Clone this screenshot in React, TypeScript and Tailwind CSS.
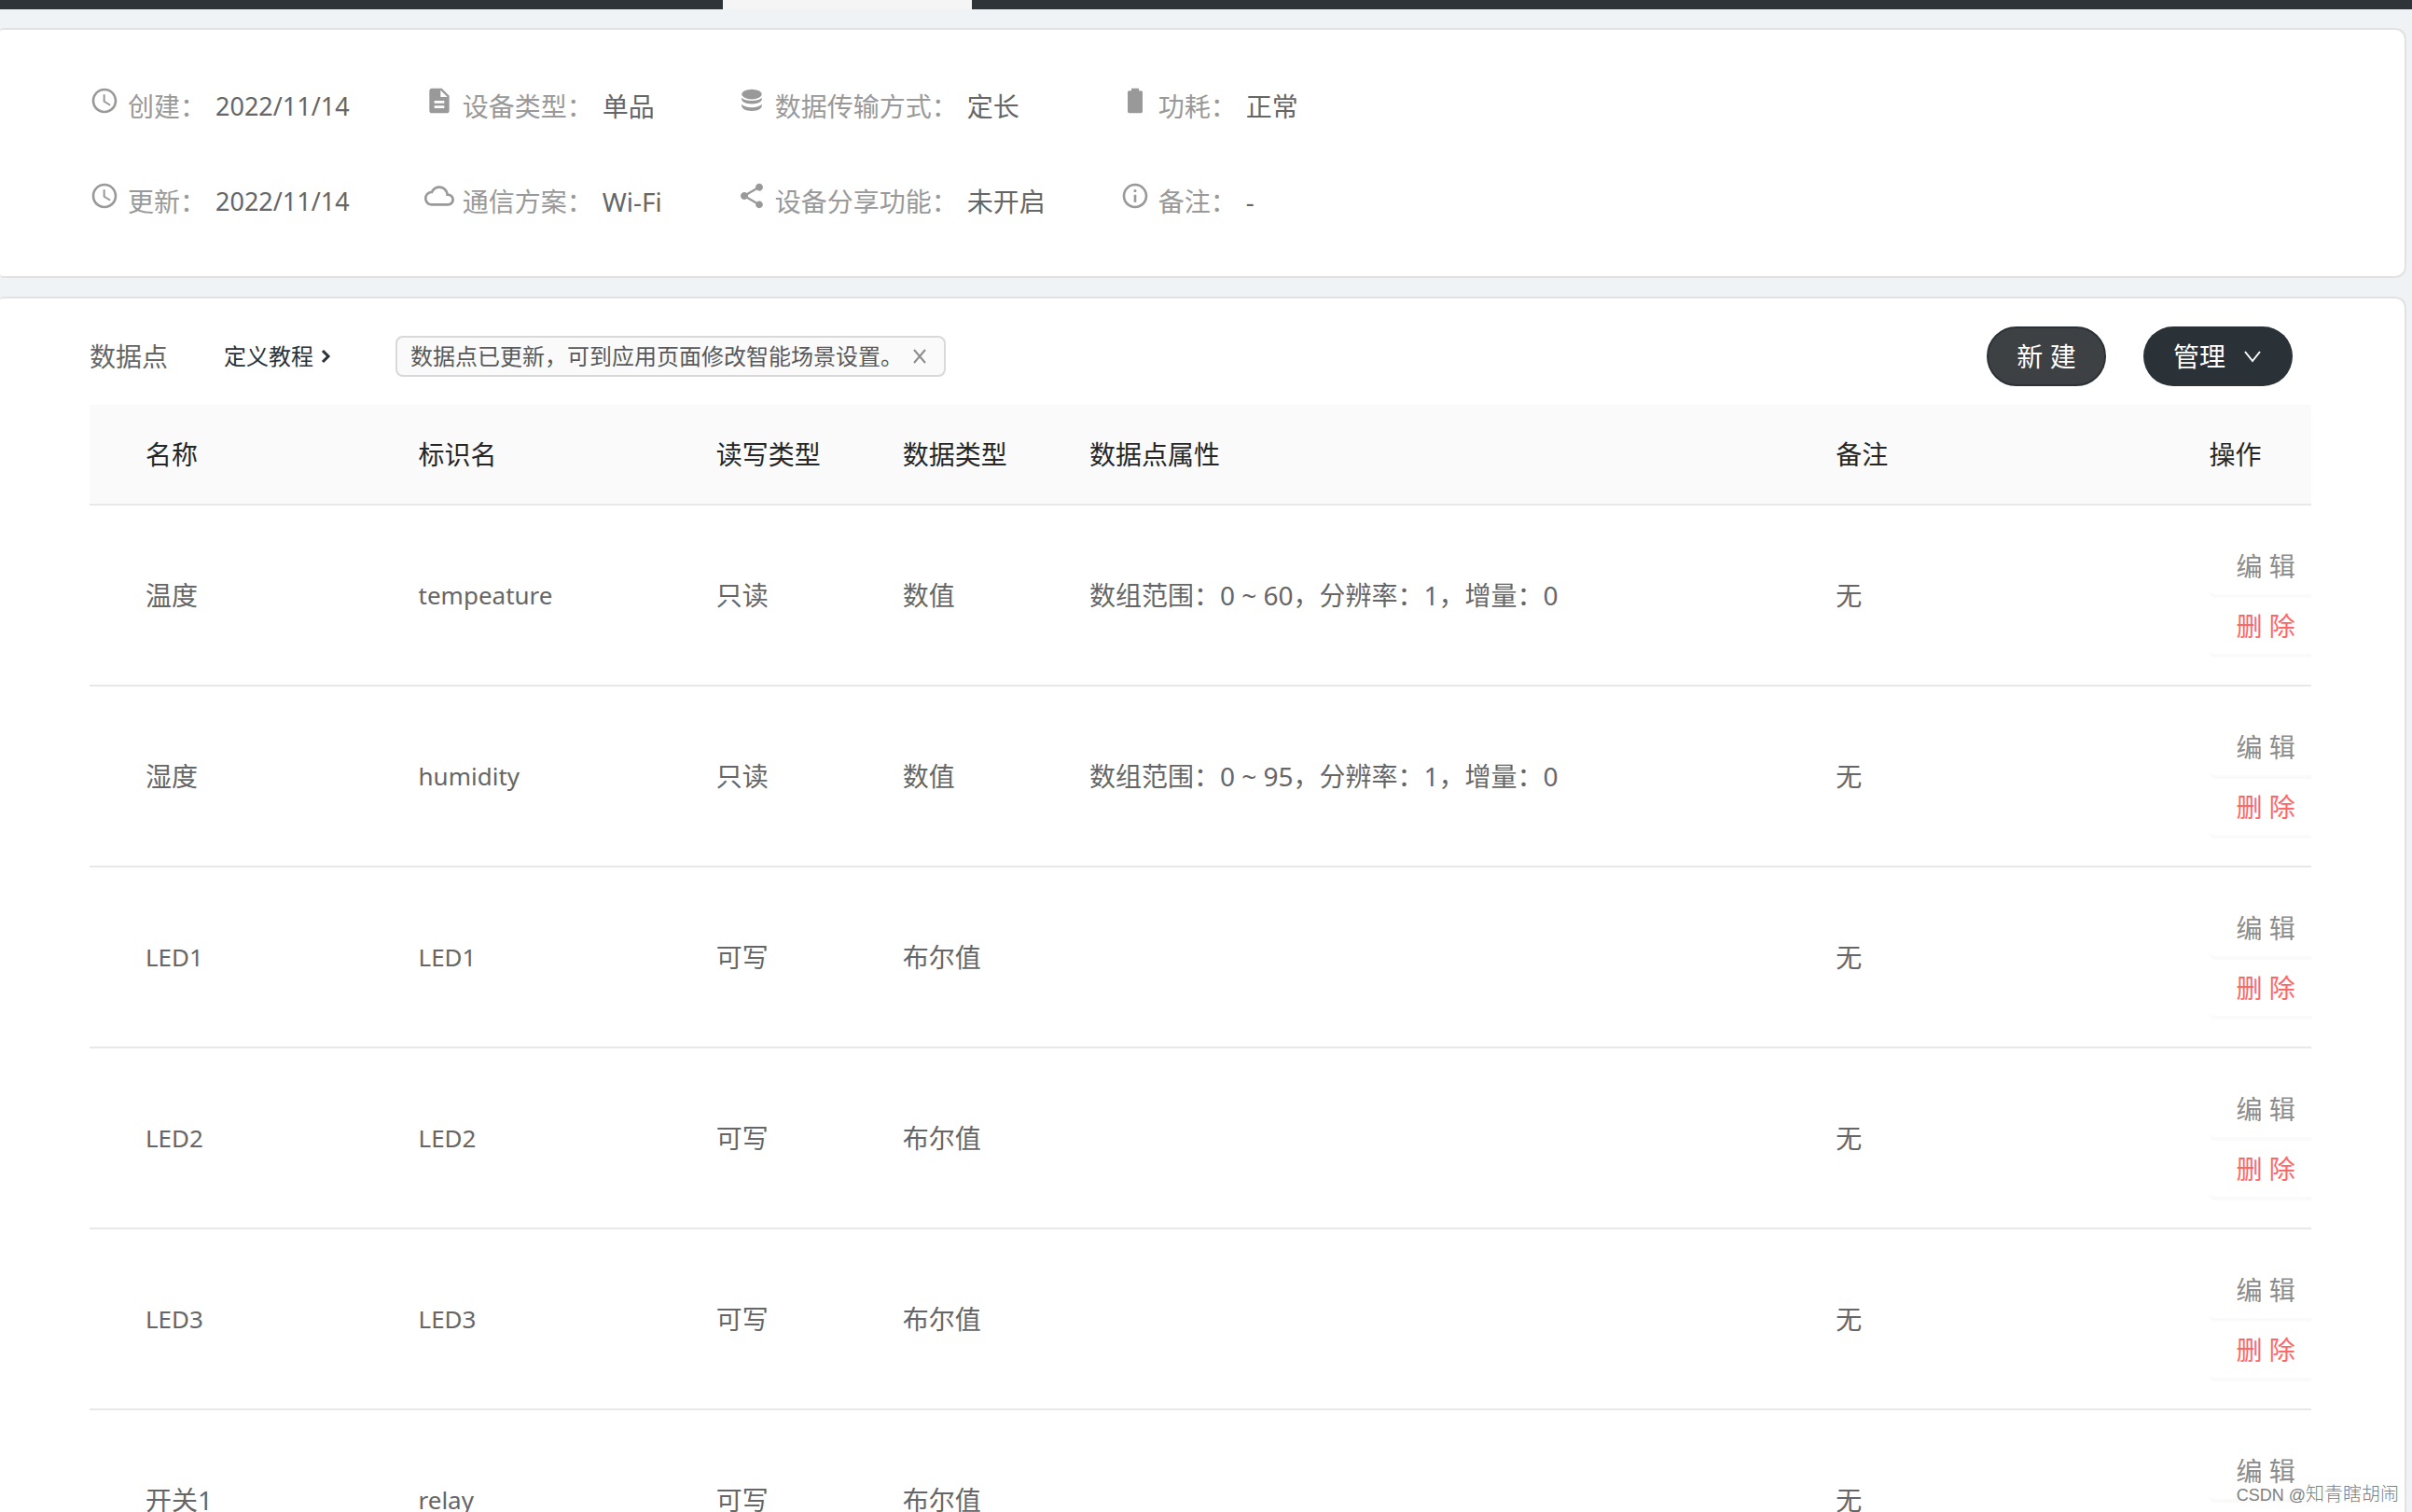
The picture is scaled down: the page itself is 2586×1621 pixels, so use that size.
import type { ReactNode } from "react";
import { MdAccessTime, MdCloudQueue, MdDescription, MdInfoOutline, MdShare } from "react-icons/md";

const DatabaseIcon = () => (
  <svg viewBox="0 0 24 24" width="32" height="32" fill="currentColor" aria-hidden="true">
    <ellipse cx="12" cy="6.8" rx="8.1" ry="4" />
    <path d="M3.9 9.600c1.600 1.700 4.500 2.400 8.100 2.400s6.500-.7 8.100-2.400c.6 3.500-3.300 5-8.100 5s-8.700-1.500-8.100-5z" />
    <path d="M3.900 14.900c1.600 1.700 4.500 2.500 8.100 2.500s6.500-.8 8.100-2.500c.6 3.800-3.300 5.300-8.100 5.300s-8.700-1.500-8.100-5.300z" />
  </svg>
);

const BatteryIcon = () => (
  <svg viewBox="0 0 24 24" width="32" height="32" fill="currentColor" aria-hidden="true">
    <path d="M16.700 4H15V2H9v2H7.300C6.600 4 6 4.600 6 5.300v15.400c0 .7.600 1.300 1.300 1.300h9.400c.7 0 1.300-.6 1.300-1.300V5.300c0-.7-.6-1.300-1.300-1.300z" />
  </svg>
);

type Info = { icon: ReactNode; label: string; value: string; latin?: boolean };

const infoColumns: Info[][] = [
  [
    { icon: <MdAccessTime size={32} />, label: "创建", value: "2022/11/14", latin: true },
    { icon: <MdAccessTime size={32} />, label: "更新", value: "2022/11/14", latin: true },
  ],
  [
    { icon: <MdDescription size={32} />, label: "设备类型", value: "单品" },
    { icon: <MdCloudQueue size={32} />, label: "通信方案", value: "Wi-Fi" },
  ],
  [
    { icon: <DatabaseIcon />, label: "数据传输方式", value: "定长" },
    { icon: <MdShare size={32} />, label: "设备分享功能", value: "未开启" },
  ],
  [
    { icon: <BatteryIcon />, label: "功耗", value: "正常" },
    { icon: <MdInfoOutline size={32} />, label: "备注", value: "-" },
  ],
];

type Row = { name: string; id: string; access: string; type: string; attrs: string; note: string };

const rows: Row[] = [
  { name: "温度", id: "tempeature", access: "只读", type: "数值", attrs: "数组范围：0 ~ 60，分辨率：1，增量：0", note: "无" },
  { name: "湿度", id: "humidity", access: "只读", type: "数值", attrs: "数组范围：0 ~ 95，分辨率：1，增量：0", note: "无" },
  { name: "LED1", id: "LED1", access: "可写", type: "布尔值", attrs: "", note: "无" },
  { name: "LED2", id: "LED2", access: "可写", type: "布尔值", attrs: "", note: "无" },
  { name: "LED3", id: "LED3", access: "可写", type: "布尔值", attrs: "", note: "无" },
  { name: "开关1", id: "relay", access: "可写", type: "布尔值", attrs: "", note: "无" },
];

function InfoCard() {
  return (
    <section className="mt-5 mr-[6px] flex gap-20 rounded-l rounded-r-xl border-2 border-l-0 border-[#e2e2e2] bg-white pt-[58px] pb-14 pl-24">
      {infoColumns.map((column, i) => (
        <dl key={i} className="flex flex-col gap-[54px]">
          {column.map((item) => (
            <div key={item.label} className="flex h-12 items-center">
              <dt className="flex items-center text-[#999999]">
                <span className="mr-[9px] mb-3">{item.icon}</span>
                {item.label}：
              </dt>
              <dd className={item.latin ? "ml-[10px] text-[27px] text-[#666666]" : "ml-[10px] text-[#666666]"}>{item.value}</dd>
            </div>
          ))}
        </dl>
      ))}
    </section>
  );
}

function Toolbar() {
  return (
    <div className="flex h-16 items-center">
      <h2 className="text-[#666666]">数据点</h2>
      <a href="#tutorial" className="ml-15 flex items-center text-[24px] text-[#2a3137]">
        定义教程
        <svg viewBox="0 0 12 16" width="12" height="16" className="ml-2" fill="none" stroke="currentColor" strokeWidth="3" aria-hidden="true">
          <path d="M2 2l6 6-6 6" />
        </svg>
      </a>
      <div className="ml-[68px] flex h-11 items-center rounded-lg border-2 border-[#d9d9d9] bg-[#fafafa] pr-[18px] pl-[14px] text-[24px] text-[#595959]">
        数据点已更新，可到应用页面修改智能场景设置。
        <button type="button" aria-label="关闭" className="ml-[10px] text-[#8c8c8c]">
          <svg viewBox="0 0 16 16" width="16" height="16" fill="none" stroke="currentColor" strokeWidth="2" aria-hidden="true">
            <path d="M2 1l12 14M14 1L2 15" />
          </svg>
        </button>
      </div>
      <div className="mr-5 ml-auto flex gap-10 text-white">
        <button type="button" className="h-16 w-32 rounded-full border-2 border-[#2a3137] bg-[#3e4144]">新 建</button>
        <button type="button" className="flex h-16 w-40 items-center gap-5 rounded-full bg-[#2a3137] pl-8">
          管理
          <svg viewBox="0 0 18 14" width="18" height="14" fill="none" stroke="currentColor" strokeWidth="2" aria-hidden="true">
            <path d="M1 2l8 10 8-10" />
          </svg>
        </button>
      </div>
    </div>
  );
}

const isLatin = (text: string) => /^[\w-]+$/.test(text);

function DataTable() {
  return (
    <table className="mt-5 w-full table-fixed border-collapse text-left text-[#666666]">
      <colgroup>
        <col className="w-[14.8%]" />
        <col className="w-[13.4%]" />
        <col className="w-[8.4%]" />
        <col className="w-[8.4%]" />
        <col className="w-[33.6%]" />
        <col className="w-[16.8%]" />
        <col />
      </colgroup>
      <thead className="bg-[#fafafa] text-[#262626]">
        <tr className="h-[107px] border-b-2 border-[#e8e8e8]">
          {["名称", "标识名", "读写类型", "数据类型", "数据点属性", "备注", "操作"].map((h, i) => (
            <th key={h} scope="col" className={i === 0 ? "pl-15 font-normal" : "font-normal"}>{h}</th>
          ))}
        </tr>
      </thead>
      <tbody>
        {rows.map((row) => (
          <tr key={row.name} className="h-[194px] border-b-2 border-[#e8e8e8]">
            <td className={isLatin(row.name) ? "pl-15 text-[26px]" : "pl-15"}>{row.name}</td>
            <td className="text-[26px]">{row.id}</td>
            <td>{row.access}</td>
            <td>{row.type}</td>
            <td>{row.attrs}</td>
            <td>{row.note}</td>
            <td className="pt-[6px]">
              <button type="button" className="block h-16 w-full rounded-bl-lg border-b-4 border-[#fafafa] pl-[29px] text-left text-[#8c8c8c]">编 辑</button>
              <button type="button" className="block h-16 w-full rounded-bl-lg border-b-4 border-[#fafafa] pl-[29px] text-left text-[#ff6666]">删 除</button>
            </td>
          </tr>
        ))}
      </tbody>
    </table>
  );
}

export default function App() {
  return (
    <div className="relative h-screen overflow-hidden bg-[#eff3f6] font-['Noto_Sans','Noto_Sans_CJK_SC',sans-serif] text-[28px]">
      <header className="flex h-[10px] bg-[#2f3438]">
        <div className="ml-[775px] w-[267px] bg-[#f5f5f5]" />
      </header>
      <main>
        <InfoCard />
        <section className="mt-5 mr-[6px] rounded-tl rounded-tr-xl border-2 border-b-0 border-l-0 border-[#e2e2e2] bg-white pt-[30px] pr-25 pl-24">
          <Toolbar />
          <DataTable />
        </section>
      </main>
      <div className="absolute right-[14px] bottom-1 font-['Liberation_Sans','Noto_Sans_CJK_SC',sans-serif] text-[20px] font-light text-[#808080]">
        <span className="text-[18px]">CSDN @</span>知青瞎胡闹
      </div>
    </div>
  );
}
